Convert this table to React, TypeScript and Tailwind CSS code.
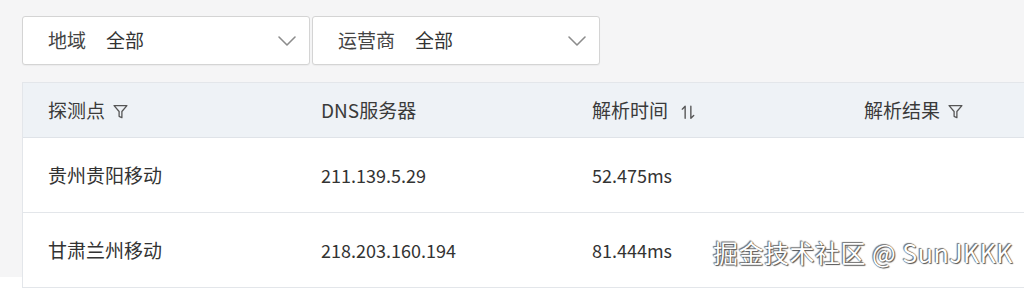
import React from "react";

const font = { fontFamily: '"Noto Sans CJK SC", "Noto Sans", sans-serif' };

function Chevron() {
  return (
    <svg width="20" height="12" viewBox="0 0 20 12" fill="none" stroke="#8c8c8c" strokeWidth="1.6" strokeLinecap="round" strokeLinejoin="round">
      <path d="M2 2 L10 10 L18 2" />
    </svg>
  );
}

function Filter() {
  return (
    <svg width="15" height="15" viewBox="0 0 14 14" fill="none" stroke="#555" strokeWidth="1.2" strokeLinejoin="round">
      <path d="M1 1.5 H13 L8.3 7 V12.8 L5.7 11.5 V7 Z" />
    </svg>
  );
}

function Sort() {
  return (
    <svg width="16" height="16" viewBox="0 0 14 14" fill="none" stroke="#555" strokeWidth="1.2" strokeLinecap="round" strokeLinejoin="round">
      <path d="M4.5 12.5 V2 L2 4.5" />
      <path d="M9.5 2 V12.5 L12 10" />
    </svg>
  );
}

function Select({ label, w }: { label: string; w: string }) {
  return (
    <div className={`${w} h-[49px] bg-white border border-[#d4d4d4] rounded-[3px] flex items-center pl-[25px] pr-[12px] shadow-[0_1px_1px_rgba(0,0,0,0.04)]`}>
      <span className="text-[19px] text-[#444]">{label}</span>
      <span className="text-[19px] text-[#333] ml-[20px]">全部</span>
      <span className="ml-auto flex items-center">
        <Chevron />
      </span>
    </div>
  );
}

const rows = [
  ["贵州贵阳移动", "211.139.5.29", "52.475ms", ""],
  ["甘肃兰州移动", "218.203.160.194", "81.444ms", ""],
];

export default function App() {
  return (
    <div className="relative w-[1024px] h-[288px] overflow-hidden bg-white" style={font}>
      <div className="h-[277px] bg-[#f5f5f6] pt-[16px] pl-[22px]">
        <div className="flex gap-[2px]">
          <Select label="地域" w="w-[288px]" />
          <Select label="运营商" w="w-[288px]" />
        </div>
        <div className="mt-[17px] w-[1100px] border-l border-t border-[#e3e6ea] bg-white">
          <div className="grid grid-cols-[272px_271px_272px_285px] h-[55px] bg-[#eef2f6] border-b border-[#dfe3e8] text-[19px] text-[#3a3a3a]">
            <div className="flex items-center pl-[25px]">
              <span>探测点</span>
              <span className="ml-[8px] mt-[3px]"><Filter /></span>
            </div>
            <div className="flex items-center pl-[26px]">DNS服务器</div>
            <div className="flex items-center pl-[26px]">
              <span>解析时间</span>
              <span className="ml-[12px] mt-[3px]"><Sort /></span>
            </div>
            <div className="flex items-center pl-[26px]">
              <span>解析结果</span>
              <span className="ml-[8px] mt-[3px]"><Filter /></span>
            </div>
          </div>
          {rows.map((r, i) => (
            <div key={i} className="grid grid-cols-[272px_271px_272px_285px] h-[75px] border-b border-[#e3e6ea] text-[18px] text-[#333]">
              {r.map((c, j) => (
                <div key={j} className={`flex items-center ${j === 0 ? "pl-[25px] text-[19px]" : "pl-[26px]"}`}>{c}</div>
              ))}
            </div>
          ))}
        </div>
      </div>
      <div
        className="absolute left-[713px] top-[234px] text-[25px] text-white tracking-[0.5px]"
        style={{ textShadow: "0 0 1px #444, 1px 1px 1px #555, -1px -1px 1px #777" }}
      >
        掘金技术社区 @ SunJKKK
      </div>
    </div>
  );
}
